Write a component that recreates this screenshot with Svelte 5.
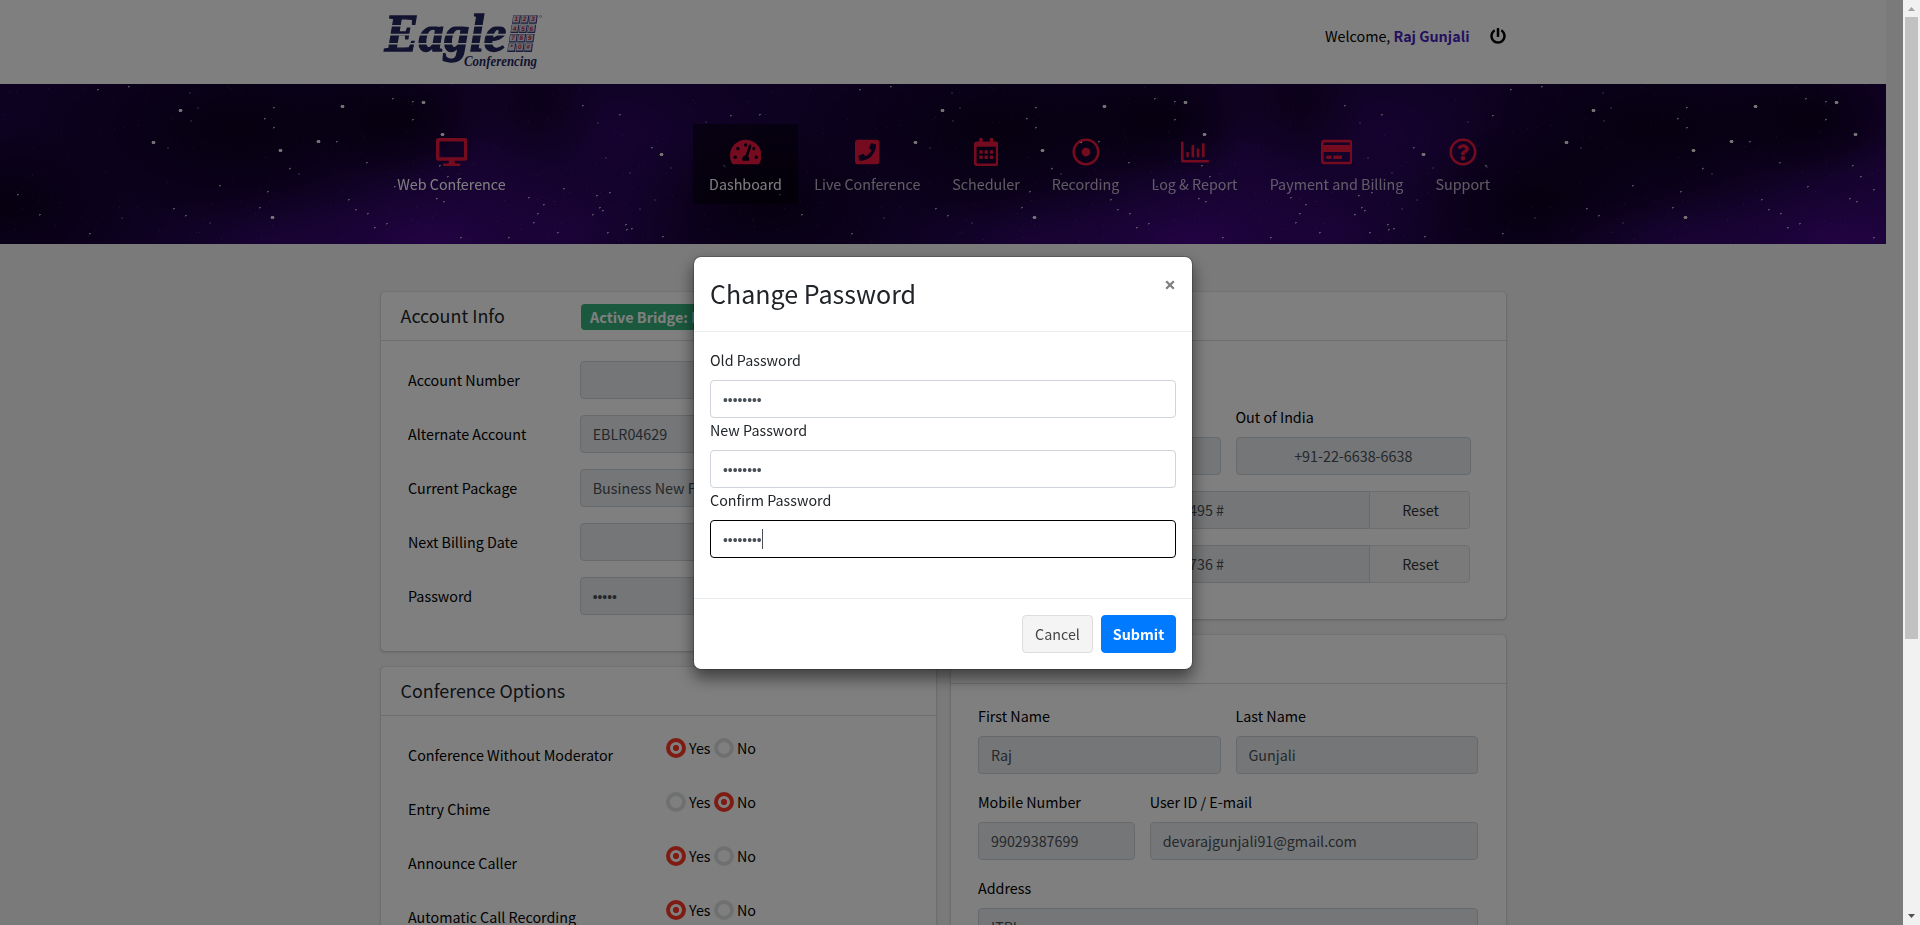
<script>
  const icons = {
    desktop: [576, 'M528 0H48C21.5 0 0 21.5 0 48v320c0 26.5 21.5 48 48 48h192l-16 48h-72c-13.3 0-24 10.7-24 24s10.7 24 24 24h272c13.3 0 24-10.7 24-24s-10.7-24-24-24h-72l-16-48h192c26.5 0 48-21.5 48-48V48c0-26.5-21.5-48-48-48zm-16 352H64V64h448v288z'],
    dashboard: [576, 'M288 32C128.94 32 0 160.94 0 320c0 52.8 14.25 102.26 39.06 144.8 5.61 9.62 16.3 15.2 27.44 15.2h443c11.14 0 21.83-5.58 27.44-15.2C561.75 422.26 576 372.8 576 320c0-159.06-128.94-288-288-288zm0 64c14.71 0 26.58 10.13 30.32 23.65-1.11 2.26-2.64 4.23-3.45 6.67l-9.22 27.67c-5.13 3.49-10.97 6.01-17.64 6.01-17.67 0-32-14.33-32-32S270.33 96 288 96zM96 384c-17.67 0-32-14.33-32-32s14.33-32 32-32 32 14.33 32 32-14.33 32-32 32zm48-160c-17.67 0-32-14.33-32-32s14.33-32 32-32 32 14.33 32 32-14.33 32-32 32zm246.77-72.41l-61.33 184C343.13 347.33 352 364.54 352 384c0 11.72-3.38 22.55-8.88 32H232.88c-5.5-9.45-8.88-20.28-8.88-32 0-33.94 26.5-61.43 59.9-63.59l61.34-184.01c4.17-12.56 17.73-19.45 30.36-15.17 12.57 4.19 19.35 17.79 15.17 30.36zm14.66 57.2l15.52-46.55c3.47-1.29 7.13-2.23 11.05-2.23 17.67 0 32 14.33 32 32s-14.33 32-32 32c-11.38-.01-20.89-6.28-26.57-15.22zM480 384c-17.67 0-32-14.33-32-32s14.33-32 32-32 32 14.33 32 32-14.33 32-32 32z'],
    phone: [448, 'M400 32H48C21.49 32 0 53.49 0 80v352c0 26.51 21.49 48 48 48h352c26.51 0 48-21.49 48-48V80c0-26.51-21.49-48-48-48zM94 416c-7.033 0-13.057-4.873-14.616-11.627l-14.998-65a15 15 0 0 1 8.707-17.16l69.998-29.999a15 15 0 0 1 17.518 4.289l30.997 37.885c48.944-22.963 88.297-62.858 110.781-110.78l-37.886-30.997a15.001 15.001 0 0 1-4.289-17.518l30-69.998a15 15 0 0 1 17.16-8.707l65 14.998A14.997 14.997 0 0 1 384 126c0 160.292-129.945 290-290 290z'],
    calendar: [448, 'M148 288h-40c-6.6 0-12-5.4-12-12v-40c0-6.6 5.4-12 12-12h40c6.6 0 12 5.4 12 12v40c0 6.6-5.4 12-12 12zm108-12v-40c0-6.6-5.4-12-12-12h-40c-6.6 0-12 5.4-12 12v40c0 6.6 5.4 12 12 12h40c6.6 0 12-5.4 12-12zm96 0v-40c0-6.6-5.4-12-12-12h-40c-6.6 0-12 5.4-12 12v40c0 6.6 5.4 12 12 12h40c6.6 0 12-5.4 12-12zm-96 96v-40c0-6.6-5.4-12-12-12h-40c-6.6 0-12 5.4-12 12v40c0 6.6 5.4 12 12 12h40c6.6 0 12-5.4 12-12zm-96 0v-40c0-6.6-5.4-12-12-12h-40c-6.6 0-12 5.4-12 12v40c0 6.6 5.4 12 12 12h40c6.6 0 12-5.4 12-12zm192 0v-40c0-6.6-5.4-12-12-12h-40c-6.6 0-12 5.4-12 12v40c0 6.6 5.4 12 12 12h40c6.6 0 12-5.4 12-12zm96-260v352c0 26.5-21.5 48-48 48H48c-26.5 0-48-21.5-48-48V112c0-26.5 21.5-48 48-48h48V12c0-6.6 5.4-12 12-12h40c6.6 0 12 5.4 12 12v52h128V12c0-6.6 5.4-12 12-12h40c6.6 0 12 5.4 12 12v52h48c26.5 0 48 21.5 48 48zm-48 346V160H48v298c0 3.3 2.7 6 6 6h340c3.3 0 6-2.7 6-6z'],
    record: [512, 'M256 56c110.532 0 200 89.451 200 200 0 110.532-89.451 200-200 200-110.532 0-200-89.451-200-200 0-110.532 89.451-200 200-200m0-48C119.033 8 8 119.033 8 256s111.033 248 248 248 248-111.033 248-248S392.967 8 256 8zm0 168c-44.183 0-80 35.817-80 80s35.817 80 80 80 80-35.817 80-80-35.817-80-80-80z'],
    chart: [512, 'M396.8 352h22.4c6.4 0 12.8-6.4 12.8-12.8V108.8c0-6.4-6.4-12.8-12.8-12.8h-22.4c-6.4 0-12.8 6.4-12.8 12.8v230.4c0 6.4 6.4 12.8 12.8 12.8zm-192 0h22.4c6.4 0 12.8-6.4 12.8-12.8V140.8c0-6.4-6.4-12.8-12.8-12.8h-22.4c-6.4 0-12.8 6.4-12.8 12.8v198.4c0 6.4 6.4 12.8 12.8 12.8zm96 0h22.4c6.4 0 12.8-6.4 12.8-12.8V204.8c0-6.4-6.4-12.8-12.8-12.8h-22.4c-6.4 0-12.8 6.4-12.8 12.8v134.4c0 6.4 6.4 12.8 12.8 12.8zM496 400H48V80c0-8.84-7.16-16-16-16H16C7.16 64 0 71.16 0 80v336c0 17.67 14.33 32 32 32h464c8.84 0 16-7.16 16-16v-16c0-8.84-7.16-16-16-16zm-387.2-48h22.4c6.4 0 12.8-6.4 12.8-12.8v-70.4c0-6.4-6.4-12.8-12.8-12.8h-22.4c-6.4 0-12.8 6.4-12.8 12.8v70.4c0 6.4 6.4 12.8 12.8 12.8z'],
    card: [576, 'M527.9 32H48.1C21.5 32 0 53.5 0 80v352c0 26.5 21.5 48 48.1 48h479.8c26.6 0 48.1-21.5 48.1-48V80c0-26.5-21.5-48-48.1-48zM54.1 80h467.8c3.3 0 6 2.7 6 6v42H48.1V86c0-3.3 2.7-6 6-6zm467.8 352H54.1c-3.3 0-6-2.7-6-6V256h479.8v170c0 3.3-2.7 6-6 6zM192 332v40c0 6.6-5.4 12-12 12h-72c-6.6 0-12-5.4-12-12v-40c0-6.6 5.4-12 12-12h72c6.6 0 12 5.4 12 12zm192 0v40c0 6.6-5.4 12-12 12H236c-6.6 0-12-5.4-12-12v-40c0-6.6 5.4-12 12-12h136c6.6 0 12 5.4 12 12z'],
    help: [512, 'M256 8C119.043 8 8 119.083 8 256c0 136.997 111.043 248 248 248s248-111.003 248-248C504 119.083 392.957 8 256 8zm0 448c-110.532 0-200-89.431-200-200 0-110.495 89.472-200 200-200 110.491 0 200 89.471 200 200 0 110.53-89.431 200-200 200zm107.244-255.2c0 67.052-72.421 68.084-72.421 92.863V300c0 6.627-5.373 12-12 12h-45.647c-6.627 0-12-5.373-12-12v-8.659c0-35.745 27.1-50.034 47.579-61.516 17.561-9.845 28.324-16.541 28.324-29.579 0-17.246-21.999-28.693-39.784-28.693-23.189 0-33.894 10.977-48.942 29.969-4.057 5.12-11.46 6.071-16.666 2.124l-27.824-21.098c-5.107-3.872-6.251-11.066-2.644-16.363C184.846 131.491 214.94 112 261.794 112c49.071 0 101.45 38.304 101.45 88.8zM298 368c0 23.159-18.841 42-42 42s-42-18.841-42-42 18.841-42 42-42 42 18.841 42 42z'],
    power: [512, 'M400 54.1c63 45 104 118.6 104 201.9 0 136.8-110.8 247.7-247.5 248C120 504.3 8.2 393 8 256.4 7.9 173.1 48.9 99.3 111.8 54.2c11.7-8.3 28-4.8 35 7.7L162.6 90c5.9 10.5 3.1 23.8-6.6 31-41.5 30.8-68 79.6-68 134.9-.1 92.3 74.5 168.1 168 168.1 91.6 0 168.6-74.2 168-169.1-.3-51.8-24.7-101.8-68.1-134-9.7-7.2-12.4-20.5-6.5-30.9l15.8-28.1c7-12.4 23.2-16.1 34.8-7.8zM296 264V24c0-13.3-10.7-24-24-24h-32c-13.3 0-24 10.7-24 24v240c0 13.3 10.7 24 24 24h32c13.3 0 24-10.7 24-24z'],
  };

  const nav = [
    { label: 'Dashboard', icon: 'dashboard', width: 105, active: true },
    { label: 'Live Conference', icon: 'phone', width: 138.5 },
    { label: 'Scheduler', icon: 'calendar', width: 99 },
    { label: 'Recording', icon: 'record', width: 100 },
    { label: 'Log & Report', icon: 'chart', width: 118 },
    { label: 'Payment and Billing', icon: 'card', width: 166 },
    { label: 'Support', icon: 'help', width: 86.5 },
  ];

  const account = [
    { label: 'Account Number', value: '' },
    { label: 'Alternate Account', value: 'EBLR04629' },
    { label: 'Current Package', value: 'Business New Flat' },
    { label: 'Next Billing Date', value: '' },
    { label: 'Password', value: '•••••', secret: true },
  ];

  const options = [
    { label: 'Conference Without Moderator', yes: true },
    { label: 'Entry Chime', yes: false },
    { label: 'Announce Caller', yes: true },
    { label: 'Automatic Call Recording', yes: true },
  ];

  const fields = [
    { label: 'Old Password' },
    { label: 'New Password' },
    { label: 'Confirm Password', focused: true },
  ];

  const keys = ['123', '456', '789', '*0#'];

  // Star field: positions inside one tile, relative to the banner's top edge.
  const bigStars = [[180, 26], [153, 58], [342, 22], [423, 18], [442, 50], [318, 57], [280, 66], [272, 133], [661, 70]];
  const stars = [[97, 5], [128, 2], [273, 23], [392, 14], [412, 17], [412, 35], [336, 57], [273, 43], [264, 34], [289, 84], [366, 78], [439, 81], [447, 92], [460, 105], [394, 102], [436, 114], [443, 117], [219, 101], [267, 107], [348, 115], [355, 125], [367, 129], [386, 139], [374, 143], [259, 123], [173, 124], [185, 131], [89, 149], [460, 153], [651, 63], [582, 21], [619, 30], [730, 31], [759, 30], [563, 104], [543, 120], [528, 113], [537, 129], [533, 138], [557, 148], [596, 111], [599, 123], [602, 126], [592, 130], [609, 108], [625, 140], [626, 145], [631, 144], [607, 148], [508, 153], [662, 152], [723, 81], [779, 110], [801, 130]];
  const dimStars = [[197, 23], [189, 8], [190, 36], [167, 63], [298, 89], [121, 133], [209, 138], [670, 83], [597, 38], [705, 37], [629, 88], [639, 124], [654, 115], [605, 73], [724, 82]];

  let seed = 7;
  const rnd = () => (seed = (seed * 16807) % 2147483647) / 2147483647;
  const dust = Array.from({ length: 300 }, () => [Math.floor(80 + rnd() * 762), Math.floor(rnd() * 160), 0.06 + rnd() * 0.16]);
</script>

{#snippet icon(name, size)}
  <svg class="icon" width={(icons[name][0] / 512) * size} height={size} viewBox="0 0 {icons[name][0]} 512"><path fill="currentColor" d={icons[name][1]} /></svg>
{/snippet}

{#snippet radio(on)}
  <span class="radio" class:on></span>
{/snippet}

<div class="screen">
  <div class="page">
    <header>
      <div class="container top">
        <svg class="logo" width="164" height="76" viewBox="380 0 164 76">
          <text x="384.5" y="50.5" class="brand wide" font-size="52" textLength="122" lengthAdjust="spacingAndGlyphs">Eagle</text>
          <path d="M380 25.8h128M380 34.6h128M380 43.8h128" stroke="#fff" stroke-width="1.6" />
          <text x="464" y="65.5" class="brand" font-size="14" textLength="73" lengthAdjust="spacingAndGlyphs">Conferencing</text>
          {#each keys as row, r}
            {#each row.split('') as key, c}
              <g transform="translate({513.2 - r * 1.6 + c * 8.4} {15.3 + r * 9.4}) skewX(-8)">
                <rect width="7.8" height="8.4" fill="#3a3d7c" />
                <rect x=".4" y=".3" width="6.3" height="6.8" fill="#d2d4e4" />
                <text x="3.6" y="6" class="key">{key}</text>
              </g>
            {/each}
          {/each}
          <circle cx="540.5" cy="16.5" r="1" fill="none" stroke="#666a99" stroke-width=".6" />
        </svg>
        <div class="welcome">
          <span>Welcome, <b>Raj Gunjali</b></span>
          {@render icon('power', 16)}
        </div>
      </div>
    </header>

    <nav>
      <svg class="sky" width="1886" height="160" viewBox="0 0 1886 160">
        <defs>
          <radialGradient id="glow"><stop offset="0" stop-color="#52089c" stop-opacity=".8" /><stop offset=".5" stop-color="#46088a" stop-opacity=".4" /><stop offset="1" stop-color="#3c0880" stop-opacity="0" /></radialGradient>
          <radialGradient id="dark"><stop offset="0" stop-color="#0a0018" stop-opacity=".8" /><stop offset=".5" stop-color="#0a0018" stop-opacity=".4" /><stop offset="1" stop-color="#0a0018" stop-opacity="0" /></radialGradient>
          <clipPath id="last"><rect x="70" y="0" width="420" height="160" /></clipPath>
          <g id="tile" shape-rendering="crispEdges">
            <ellipse cx="430" cy="160" rx="210" ry="110" fill="url(#glow)" />
            <ellipse cx="270" cy="170" rx="150" ry="70" fill="url(#glow)" opacity=".55" />
            <ellipse cx="570" cy="150" rx="150" ry="100" fill="url(#glow)" opacity=".5" />
            <ellipse cx="620" cy="50" rx="170" ry="110" fill="url(#glow)" opacity=".42" />
            <ellipse cx="480" cy="60" rx="90" ry="110" fill="url(#glow)" opacity=".35" />
            <ellipse cx="240" cy="45" rx="210" ry="100" fill="url(#dark)" />
            <ellipse cx="400" cy="35" rx="110" ry="60" fill="url(#dark)" />
            <ellipse cx="535" cy="20" rx="70" ry="70" fill="url(#dark)" opacity=".6" />
            <ellipse cx="770" cy="120" rx="130" ry="80" fill="url(#dark)" />
          </g>
          <g id="stars" shape-rendering="crispEdges">
            {#each dust as [x, y, o]}<rect {x} {y} width="1" height="1" fill="#c9b8ff" opacity={o} />{/each}
            {#each dimStars as [x, y]}<rect {x} {y} width="2" height="2" fill="#b9a8e8" opacity=".3" />{/each}
            {#each stars as [x, y]}<rect {x} {y} width="2" height="1" fill="#fff" opacity=".6" /><rect {x} y={y + 1} width="1" height="1" fill="#fff" opacity=".35" />{/each}
            {#each bigStars as [x, y]}<path d="M{x - 1} {y - 1}h3v3h-3z" fill="#fff" opacity=".85" /><path d="M{x - 2} {y}h5v1h-5z" fill="#fff" opacity=".4" />{/each}
          </g>
        </defs>
        <rect width="1886" height="160" fill="#1a0440" />
        <use href="#tile" x="-762" />
        <use href="#tile" />
        <use href="#tile" x="762" />
        <use href="#tile" x="1413" />
        <use href="#stars" x="-762" />
        <use href="#stars" />
        <use href="#stars" x="651" clip-path="url(#none)" opacity="0" />
        <g clip-path="url(#middle)"><use href="#stars" x="762" /></g>
        <clipPath id="middle"><rect x="800" y="0" width="695" height="160" /></clipPath>
        <g transform="translate(1413 0)" clip-path="url(#last)"><use href="#stars" /></g>
      </svg>
      <div class="container menu">
        <div class="item lit" style:width="141px">{@render icon('desktop', 28)}<span>Web Conference</span></div>
        <div class="items">
          {#each nav as n}
            <div class="item" class:lit={n.active} class:active={n.active} style:width="{n.width}px">{@render icon(n.icon, 28)}<span>{n.label}</span></div>
          {/each}
        </div>
      </div>
    </nav>

    <main class="container">
      <div class="col">
        <section class="card">
          <div class="head">Account Info <span class="badge">Active Bridge: BLR</span></div>
          <div class="body">
            {#each account as a}
              <div class="row"><label>{a.label}</label><div class="input" class:dots={a.secret}>{a.value}</div></div>
            {/each}
          </div>
        </section>
        <section class="card">
          <div class="head">Conference Options</div>
          <div class="body">
            {#each options as o}
              <div class="row opt">
                <label>{o.label}</label>
                <div class="radios">{@render radio(o.yes)}<span class="yes">Yes</span>{@render radio(!o.yes)}<span>No</span></div>
              </div>
            {/each}
          </div>
        </section>
      </div>
      <div class="col">
        <section class="card">
          <div class="head"></div>
          <div class="body dial">
            <div class="pair">
              <div class="field"><label>&nbsp;</label><div class="input"></div></div>
              <div class="field"><label>Out of India</label><div class="input center">+91-22-6638-6638</div></div>
            </div>
            <div class="group"><div class="input">495 #</div><div class="reset">Reset</div></div>
            <div class="group"><div class="input">736 #</div><div class="reset">Reset</div></div>
          </div>
        </section>
        <section class="card">
          <div class="head"></div>
          <div class="body">
            <div class="pair">
              <div class="field"><label>First Name</label><div class="input">Raj</div></div>
              <div class="field"><label>Last Name</label><div class="input">Gunjali</div></div>
            </div>
            <div class="pair third">
              <div class="field"><label>Mobile Number</label><div class="input">99029387699</div></div>
              <div class="field"><label>User ID / E-mail</label><div class="input">devarajgunjali91@gmail.com</div></div>
            </div>
            <div class="pair one">
              <div class="field"><label>Address</label><div class="input">ITPL</div></div>
            </div>
          </div>
        </section>
      </div>
    </main>
  </div>

  <div class="backdrop">
    <div class="modal">
      <div class="mhead">
        <h3>Change Password</h3>
        <svg width="10" height="10" viewBox="0 0 10 10"><path d="M1.2 1.2l7.6 7.6M8.8 1.2L1.2 8.8" stroke="#7f7f7f" stroke-width="2.3" /></svg>
      </div>
      <div class="mbody">
        {#each fields as f}
          <label>{f.label}</label>
          <div class="input dots" class:focused={f.focused}>••••••••{#if f.focused}<i class="caret"></i>{/if}</div>
        {/each}
      </div>
      <div class="mfoot">
        <button class="cancel">Cancel</button>
        <button class="submit">Submit</button>
      </div>
    </div>
  </div>

  <div class="scrollbar">
    <svg width="17" height="17" viewBox="0 0 17 17"><path d="M5 11h7L8.5 7z" fill="#a3a3a3" /></svg>
    <div class="thumb"></div>
    <svg width="17" height="17" viewBox="0 0 17 17"><path d="M5 6h7L8.5 10z" fill="#505050" /></svg>
  </div>
</div>

<style>
  :global(body) { margin: 0; overflow: hidden; }
  .screen, .screen * { box-sizing: border-box; }
  .screen {
    position: relative; width: 1920px; height: 925px; overflow: hidden; background: #f4f4f4;
    font-family: "Noto Sans CJK SC", "Noto Sans", sans-serif; font-size: 14.32px; line-height: 24px; color: #212529;
  }
  .page { width: 1886px; }
  .container { width: 1125px; margin: 0 auto; display: flex; justify-content: space-between; }
  .icon { display: block; flex: none; }
  header { height: 84px; background: #fff; color: #000; }
  .logo { display: block; margin-left: -.5px; }
  .brand { font-family: "Liberation Serif", serif; font-weight: bold; font-style: italic; fill: #23265f; }
  .wide { stroke: #23265f; stroke-width: 1.3px; }
  .key { font: bold 6.5px "Liberation Sans", sans-serif; fill: #c8202c; text-anchor: middle; }
  .welcome { display: flex; align-items: center; gap: 20px; height: 72px; }
  .welcome b { color: #4a1fc0; }
  nav { position: relative; height: 160px; overflow: hidden; }
  .sky { position: absolute; left: 0; top: 0; }
  .menu { position: relative; padding-top: 40px; }
  .items { display: flex; }
  .item { height: 80px; padding: 14px 0 0 1px; display: flex; flex-direction: column; align-items: center; gap: 6px; color: #e8173e; white-space: nowrap; }
  .item span { color: rgba(255, 255, 255, .72); margin-top: -.5px; }
  .item.lit span { color: #fff; }
  .item.active { background: rgba(0, 0, 0, .5); }
  main { padding-top: 48px; }
  .col { width: 555px; display: flex; flex-direction: column; gap: 16px; }
  .card { background: #fff; border-radius: 4px; box-shadow: 0 0 1px rgba(0, 0, 0, .25), 0 1px 3px rgba(0, 0, 0, .2); }
  .head { height: 49px; padding: 0 20px 2px; border-bottom: 1px solid #dcdcdc; display: flex; align-items: center; font-size: 17.9px; position: relative; }
  .badge { position: absolute; left: 200px; top: 12px; height: 26px; width: 180px; padding: 0 9.5px; border-radius: 4px; background: #35b27c; color: #fff; font-size: 14.4px; font-weight: bold; line-height: 26px; }
  .body { padding: 20px 27.5px; color: #000; }
  .row { display: flex; align-items: center; height: 38px; margin-bottom: 16px; }
  .row label { width: 171.7px; }
  .row .input { flex: 1; }
  .input { height: 38px; padding: 0 12px; border: 1px solid #ced4da; border-radius: 4px; background: #e9ecef; color: #495057; line-height: 36px; white-space: nowrap; }
  .input.center { text-align: center; }
  .dots { font-family: "Liberation Sans", sans-serif; font-size: 13.8px; line-height: 40px; display: flex; }
  .opt label { width: 258px; }
  .radios { display: flex; align-items: center; align-self: flex-start; height: 24px; }
  .radio { width: 20px; height: 20px; border: 4px solid #dee0e2; border-radius: 50%; margin-right: 3px; }
  .radio.on { border-color: #fc3827; background: radial-gradient(circle, #fc3827 2.8px, transparent 3.4px); }
  .yes { width: 25px; }
  .dial { padding-top: 64px; padding-right: 35px; }
  .dial .pair { margin-right: -7.5px; }
  .dial .pair .field:last-child .input { margin-right: 7px; }
  .pair { display: grid; grid-template-columns: 1fr 1fr; gap: 15px; margin-bottom: 16px; }
  .third { grid-template-columns: 156.67px 1fr; }
  .one { grid-template-columns: 1fr; }
  .field label { display: block; margin-bottom: 8px; }
  .group { display: flex; margin-bottom: 16px; margin-right: .5px; }
  .group .input { flex: 1; border-radius: 4px 0 0 4px; text-align: right; padding-right: 145px; }
  .reset { width: 100px; height: 38px; padding-left: 2px; border: 1px solid #ddd; border-left: 0; border-radius: 0 4px 4px 0; background: #f4f4f4; text-align: center; line-height: 36px; color: #333; }
  .backdrop { position: absolute; left: 0; top: 0; width: 1903px; height: 925px; padding: 256px 17px 0 0; background: rgba(0, 0, 0, .5); display: flex; justify-content: center; align-items: flex-start; }
  .modal { width: 500px; height: 414px; background: #fff; background-clip: padding-box; border: 1px solid rgba(0, 0, 0, .2); border-radius: 8px; box-shadow: 0 8px 16px rgba(0, 0, 0, .5); }
  .mhead { height: 75px; padding: 16px; display: flex; justify-content: space-between; border-bottom: 1px solid #e9ecef; }
  .mhead h3 { margin: 3px 0 0; font-size: 25.05px; font-weight: 400; line-height: 34px; color: #212529; }
  .mhead svg { margin: 7px 1px 0 0; }
  .mbody { height: 266px; padding: 16px; }
  .mbody label { display: block; margin-bottom: 8px; }
  .mbody .input { background: #fff; }
  .mbody .focused { border-color: #000; }
  .caret { width: 1px; height: 20px; margin-top: 8px; background: #495057; }
  .mfoot { border-top: 1px solid #e9ecef; padding: 16px; display: flex; justify-content: flex-end; gap: 8px; }
  button { height: 38px; padding: 0; border-radius: 4px; font: inherit; line-height: 36px; }
  .cancel { width: 71px; background: #f4f4f4; border: 1px solid #ddd; color: #444; }
  .submit { width: 75px; background: #007bff; border: 1px solid #007bff; color: #fff; font-weight: bold; }
  .scrollbar { position: absolute; right: 0; top: 0; width: 17px; height: 925px; background: #f1f1f1; display: flex; flex-direction: column; }
  .scrollbar svg { display: block; }
  .thumb { width: 13px; height: 622px; margin: 0 2px auto; background: #c1c1c1; }
</style>
